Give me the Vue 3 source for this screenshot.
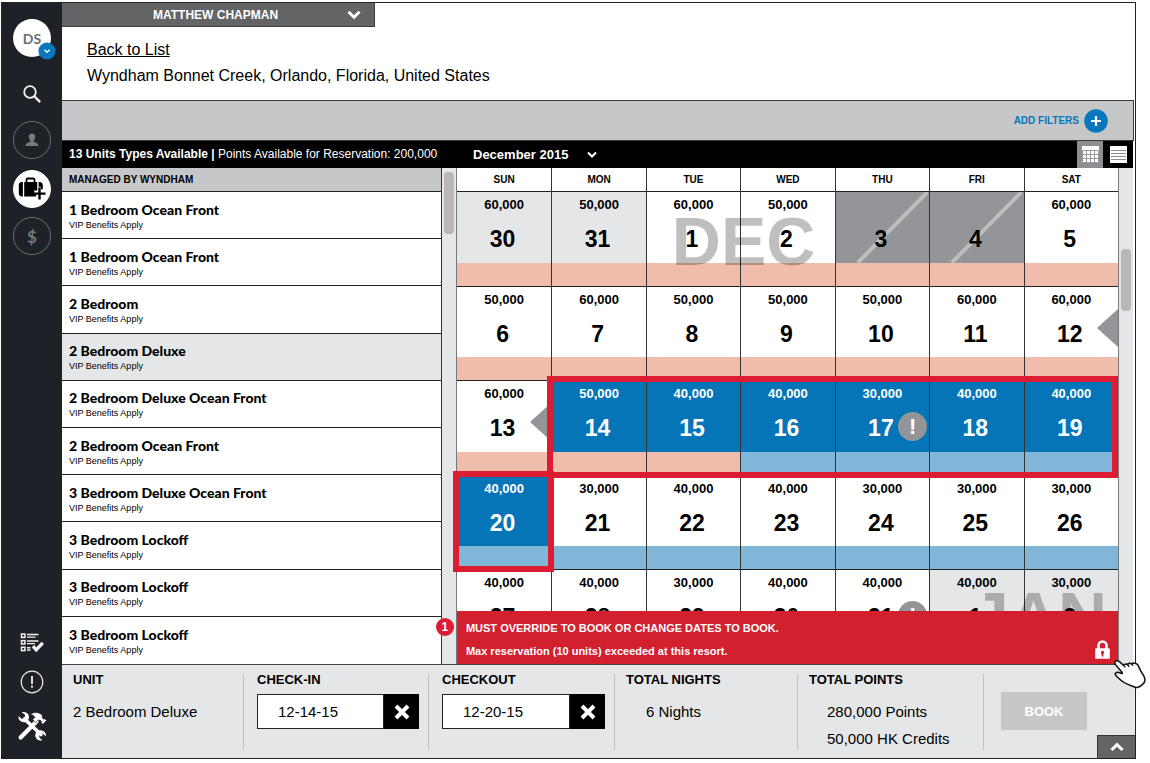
<script setup>
import { ref } from 'vue'

const units = [
  '1 Bedroom Ocean Front',
  '1 Bedroom Ocean Front',
  '2 Bedroom',
  '2 Bedroom Deluxe',
  '2 Bedroom Deluxe Ocean Front',
  '2 Bedroom Ocean Front',
  '3 Bedroom Deluxe Ocean Front',
  '3 Bedroom Lockoff',
  '3 Bedroom Lockoff',
  '3 Bedroom Lockoff'
]
const selectedUnit = ref(3)

const days = ['SUN', 'MON', 'TUE', 'WED', 'THU', 'FRI', 'SAT']

const weeks = [
  [
    { d: 30, p: '60,000', out: true, band: 'peach' },
    { d: 31, p: '50,000', out: true, band: 'peach' },
    { d: 1, p: '60,000', band: 'peach', month: 'DEC' },
    { d: 2, p: '50,000', band: 'peach' },
    { d: 3, closed: true, band: 'peach' },
    { d: 4, closed: true, band: 'peach' },
    { d: 5, p: '60,000', band: 'peach' }
  ],
  [
    { d: 6, p: '50,000', band: 'peach' },
    { d: 7, p: '60,000', band: 'peach' },
    { d: 8, p: '50,000', band: 'peach' },
    { d: 9, p: '50,000', band: 'peach' },
    { d: 10, p: '50,000', band: 'peach' },
    { d: 11, p: '60,000', band: 'peach' },
    { d: 12, p: '60,000', band: 'peach', arrow: true }
  ],
  [
    { d: 13, p: '60,000', band: 'peach', arrow: true },
    { d: 14, p: '50,000', picked: true, band: 'peach' },
    { d: 15, p: '40,000', picked: true, band: 'peach' },
    { d: 16, p: '40,000', picked: true, band: 'sky' },
    { d: 17, p: '30,000', picked: true, band: 'sky', warn: true },
    { d: 18, p: '40,000', picked: true, band: 'sky' },
    { d: 19, p: '40,000', picked: true, band: 'sky' }
  ],
  [
    { d: 20, p: '40,000', picked: true, band: 'sky' },
    { d: 21, p: '30,000', band: 'sky' },
    { d: 22, p: '40,000', band: 'sky' },
    { d: 23, p: '40,000', band: 'sky' },
    { d: 24, p: '30,000', band: 'sky' },
    { d: 25, p: '30,000', band: 'sky' },
    { d: 26, p: '30,000', band: 'sky' }
  ],
  [
    { d: 27, p: '40,000', band: 'sky' },
    { d: 28, p: '40,000', band: 'sky' },
    { d: 29, p: '30,000', band: 'sky' },
    { d: 30, p: '40,000', band: 'sky' },
    { d: 31, p: '40,000', band: 'sky', warn: true },
    { d: 1, p: '40,000', out: true, band: 'sky', month: 'JAN' },
    { d: 2, p: '30,000', out: true, band: 'sky' }
  ]
]

const month = ref('December 2015')
const checkIn = ref('12-14-15')
const checkOut = ref('12-20-15')
</script>

<template>
  <div class="frame">
    <nav class="sidebar" aria-label="Main">
      <button class="avatar" aria-label="Account">
        DS
        <svg class="avatar-badge" viewBox="0 0 18 18" width="18" height="18">
          <circle cx="9" cy="9" r="8.6" fill="#0877bb" />
          <path d="M6.4 7.8 9 10.2l2.6-2.4" fill="none" stroke="#fff" stroke-width="1.4" />
        </svg>
      </button>
      <button class="icon search" aria-label="Search">
        <svg viewBox="0 0 20 20" width="20" height="20" fill="none" stroke="#f2f2f2">
          <circle cx="8" cy="8" r="5.8" stroke-width="1.8" />
          <path d="m12 12 6.2 6.2" stroke-width="2.4" />
        </svg>
      </button>
      <button class="ring person" aria-label="Owner">
        <svg viewBox="0 0 16 16" width="16" height="16" fill="#76797d">
          <path d="M8 1.5c2.2 0 3.3 1.5 3.2 3.4-.1 1.600-.7 2.800-1.500 3.600v1.300c1.200.9 4.800.9 4.800 4.200H1.500c0-3.300 3.600-3.300 4.800-4.200V8.500C5.500 7.700 4.900 6.500 4.800 4.900 4.700 3 5.800 1.500 8 1.500z" />
        </svg>
      </button>
      <button class="ring travel" aria-label="Book travel">
        <svg viewBox="0 0 28 24" width="28" height="24">
          <path d="M8.500 5.500V2.700q0-1.200 1.200-1.200h5.600q1.200 0 1.200 1.200v2.800" fill="none" stroke="#000" stroke-width="1.800" />
          <path d="M6.200 5h13v8.500h-3v4h2v2h-12z" fill="#000" />
          <path d="M4.900 5v14.500H3.200Q.8 19 .8 15.800V8.700Q.8 5.500 3.200 5z" fill="#000" />
          <path d="M20.600 5.100h1.600q2.600.4 2.600 3.600v3.500h-2v-2.400h-2.200z" fill="#000" />
          <path d="M21.500 10.500v12M15.500 16.600h12" stroke="#000" stroke-width="2.400" />
        </svg>
      </button>
      <button class="ring dollar" aria-label="Payments">$</button>

      <button class="icon tasks" aria-label="Tasks">
        <svg viewBox="0 0 24 20" width="24" height="20" fill="none" stroke="#f2f2f2">
          <g stroke-width="1.500">
            <rect x="1.500" y="1" width="3.400" height="3.400" />
            <rect x="1.500" y="7.600" width="3.400" height="3.400" />
            <rect x="1.500" y="14.200" width="3.400" height="3.400" />
            <path d="M7 1.500h11.500M7 4.100h8.500M7 8h11.500M7 10.600h8M7 14.800h3.500M7 17h3.500" stroke-width="1.400" />
          </g>
          <path d="m13 13.200 3.200 3.600 6.600-7" stroke-width="3.400" />
        </svg>
      </button>
      <button class="icon notices" aria-label="Notices">
        <svg viewBox="0 0 24 24" width="24" height="24" fill="none" stroke="#e6e6e6">
          <circle cx="12" cy="12" r="10.800" stroke-width="1.200" />
          <path d="M12 6v8M12 15.600v2.200" stroke-width="1.900" />
        </svg>
      </button>
      <button class="icon tools" aria-label="Settings">
        <svg viewBox="0 0 30 30" width="30" height="30">
          <g fill="none" stroke="#fff" stroke-linecap="round">
            <path d="M7.500 8 24 23.500" stroke-width="3.600" />
            <path d="M19.500 10.500 3.600 26.400" stroke-width="4.200" />
          </g>
          <path d="M1.600 5.300 5 8l3-1-.2-3.400L4.700 1.300C7.500.2 10.900 1.600 11.800 4.600c.7 2.600-.4 5.300-2.700 6.300-2.900 1.100-6.600-.4-7.500-3.300-.2-.8-.2-1.600 0-2.300z" fill="#fff" />
          <path d="m28.700 25.200-3.100-2.900-3.300.9.100 3.500 3 2.500c-2.800 1-6.200-.4-7-3.500-.6-2.600.6-5.200 2.900-6.100 2.900-1.100 6.700.4 7.500 3.500.2.700.2 1.400-.1 2.100z" fill="#fff" />
          <path d="M13.300 3.300C17.200.5 22 .8 25.200 4.300l.2 2.600 1.400 1.300 1-.5 1.700 1.800-3.600 3.700-1.900-1.700.4-1-1.200-1.300-2.300.1-2.200 2.200-3-2.900 2.200-2.200c-.8-1.500-2.200-2.600-4.600-3.100z" fill="#fff" stroke="#1e2128" stroke-width=".7" />
        </svg>
      </button>
    </nav>

    <main class="main">
      <header class="head">
        <button class="client">
          <span class="client-name">MATTHEW CHAPMAN</span>
          <svg viewBox="0 0 14 10" width="14" height="10"><path d="m1.500 1.800 5.500 5.400 5.500-5.400" fill="none" stroke="#fff" stroke-width="3" /></svg>
        </button>
        <div class="titles">
          <a href="#list" class="back">Back to List</a>
          <h1>Wyndham Bonnet Creek, Orlando, Florida, United States</h1>
        </div>
      </header>

      <div class="filters">
        <button class="add">
          ADD FILTERS
          <svg viewBox="0 0 24 24" width="24" height="24">
            <circle cx="12" cy="12" r="11.800" fill="#0877bb" />
            <path d="M12 7v10M7 12h10" stroke="#fff" stroke-width="2.200" />
          </svg>
        </button>
      </div>

      <div class="toolbar">
        <p class="summary"><b>13 Units Types Available |</b> Points Available for Reservation: 200,000</p>
        <label class="month">
          <select v-model="month" aria-label="Month">
            <option>December 2015</option>
            <option>January 2016</option>
          </select>
          <svg viewBox="0 0 10 8" width="10" height="8"><path d="m1 1.500 4 4 4-4" fill="none" stroke="#fff" stroke-width="2" /></svg>
        </label>
        <div class="views">
          <button class="view on" aria-label="Calendar view">
            <svg viewBox="0 0 17 17" width="17" height="17">
              <path d="M0 0h17v17H0z" fill="#fff" />
              <path d="M.5 4.500h16M.5 8.500h16M.5 12.500h16M4.500 4.500v12M8.500 4.500v12M12.500 4.500v12M.5 4.500v12h16v-12" fill="none" stroke="#98999c" />
            </svg>
          </button>
          <button class="view" aria-label="List view">
            <svg viewBox="0 0 17 17" width="17" height="17">
              <path d="M0 0h17v17H0z" fill="#fff" />
              <path d="M1 4.500h15M1 7.500h15M1 10.500h15M1 13.500h15" stroke="#8a8b8e" />
            </svg>
          </button>
        </div>
      </div>

      <div class="body">
        <section class="units">
          <h2>MANAGED BY WYNDHAM</h2>
          <ul>
            <li v-for="(u, i) in units" :key="i">
              <button :class="['unit', { on: i === selectedUnit }]" @click="selectedUnit = i">
                <strong>{{ u }}</strong>
                <span>VIP Benefits Apply</span>
              </button>
            </li>
          </ul>
        </section>

        <div class="track"><div class="thumb"></div></div>

        <section class="calendar">
          <table>
            <thead>
              <tr><th v-for="d in days" :key="d" scope="col">{{ d }}</th></tr>
            </thead>
            <tbody>
              <tr v-for="(w, wi) in weeks" :key="wi">
                <td v-for="(c, ci) in w" :key="ci" :class="{ out: c.out, closed: c.closed, picked: c.picked }">
                  <svg v-if="c.closed" class="slash" viewBox="0 0 94 71" preserveAspectRatio="none">
                    <path d="M22 71 92 0" stroke="#bcbdbf" stroke-width="4" />
                  </svg>
                  <span v-if="c.month" :class="['watermark', c.month.toLowerCase()]">{{ c.month }}</span>
                  <span class="price">{{ c.p }}</span>
                  <span class="day">{{ c.d }}</span>
                  <svg v-if="c.arrow" class="arrow" viewBox="0 0 21 38" width="21" height="38"><path d="M21 0v38L0 19z" fill="#939598" /></svg>
                  <span v-if="c.warn" class="warn">!</span>
                  <span :class="['band', c.band]"></span>
                </td>
              </tr>
            </tbody>
          </table>
          <div class="marks" aria-hidden="true">
            <div class="mark week3"></div>
            <div class="mark week4"></div>
          </div>
          <div class="alert" role="alert">
            <span class="count">1</span>
            <p>MUST OVERRIDE TO BOOK OR CHANGE DATES TO BOOK.</p>
            <p>Max reservation (10 units) exceeded at this resort.</p>
            <svg class="lock" viewBox="0 0 15 19" width="15" height="19">
              <path d="M3.500 9V5.500a4 4 0 0 1 8 0V9" fill="none" stroke="#fff" stroke-width="2.600" />
              <path d="M1 8.300h13q.8 0 .8.800v8.900q0 .8-.8.800H1q-.8 0-.8-.8V9.100q0-.8.800-.8z" fill="#fff" />
              <path d="M7.500 10.800a1.700 1.700 0 0 1 .9 3.100v2.600H6.600v-2.600a1.700 1.700 0 0 1 .9-3.100z" fill="#d2202f" />
            </svg>
          </div>
        </section>

        <div class="track right"><div class="thumb"></div></div>
      </div>

      <footer class="booking">
        <div class="field unit-field">
          <h3>UNIT</h3>
          <p>2 Bedroom Deluxe</p>
        </div>
        <div class="field dates">
          <label for="check-in">CHECK-IN</label>
          <div class="date">
            <input id="check-in" v-model="checkIn" type="text" />
            <button aria-label="Clear check-in" @click="checkIn = ''">
              <svg viewBox="0 0 16 16" width="16" height="16"><path d="m2 2 12 12M14 2 2 14" stroke="#fff" stroke-width="4" /></svg>
            </button>
          </div>
        </div>
        <div class="field dates">
          <label for="check-out">CHECKOUT</label>
          <div class="date">
            <input id="check-out" v-model="checkOut" type="text" />
            <button aria-label="Clear checkout" @click="checkOut = ''">
              <svg viewBox="0 0 16 16" width="16" height="16"><path d="m2 2 12 12M14 2 2 14" stroke="#fff" stroke-width="4" /></svg>
            </button>
          </div>
        </div>
        <div class="field nights">
          <h3>TOTAL NIGHTS</h3>
          <p>6 Nights</p>
        </div>
        <div class="field points">
          <h3>TOTAL POINTS</h3>
          <p>280,000 Points</p>
          <p>50,000 HK Credits</p>
        </div>
        <div class="action">
          <button class="book" disabled>BOOK</button>
        </div>
        <button class="expand" aria-label="Expand">
          <svg viewBox="0 0 14 10" width="14" height="10"><path d="m1.500 8 5.500-5.400L12.500 8" fill="none" stroke="#fff" stroke-width="3" /></svg>
        </button>
      </footer>
    </main>

    <svg class="hand" viewBox="0 0 34 32" width="34" height="32">
      <path d="M2.300 2.500C3.500 1.300 5 1.500 6.400 2.600l4.200 3.800c.5-1.300 2.300-1.700 3.800-.9.700-1.200 2.800-1.500 4.200-.6 1-1 4.600-1.200 6.200.9 1.400 2.400 2.400 5.500 4 8 1.600 2.200 3.200 4.800 3.200 7.200 0 3.200-4.400 6.700-7.700 7.400-2.800.4-4.200-1.200-7.200-2.200-4-1.300-8.800-4.200-12.300-7.700-2.600-2.600-3.200-3.700-2-4.700 1.300-1 3.700-.2 5.800.6.700.3.900-.2.600-.8L2.800 6c-1-1.500-1.400-2.600-.5-3.500z" fill="#fff" stroke="#1a1a1a" stroke-width="1.600" stroke-linejoin="round" />
      <path d="m10.600 6.400 1.800 2M14.400 5.500l1.800 2.200M18.600 4.900l1.400 2" fill="none" stroke="#1a1a1a" stroke-width="1.400" />
    </svg>
  </div>
</template>

<style>
body {
  background: #fff;
}
</style>

<style scoped>
* {
  box-sizing: border-box;
}
.frame {
  position: relative;
  display: flex;
  min-height: calc(100vh - 6px);
  margin: 2px 14px 4px 1px;
  border: 1px solid #222;
  font-family: "Liberation Sans", Arial, sans-serif;
  color: #000;
}
button,
input,
select {
  font-family: inherit;
  margin: 0;
  padding: 0;
  border: 0;
  background: none;
  color: inherit;
}
h1, h2, h3, p, ul {
  margin: 0;
  padding: 0;
}
svg {
  display: block;
  flex: none;
}

/* sidebar */
.sidebar {
  flex: none;
  width: 60px;
  padding: 16px 0 17px;
  display: flex;
  flex-direction: column;
  align-items: center;
  background: #1e2128;
}
.avatar {
  position: relative;
  width: 38px;
  height: 38px;
  border-radius: 50%;
  background: #fff;
  color: #6d6f73;
  font: bold 14px Lato, sans-serif;
}
.avatar-badge {
  position: absolute;
  right: -5px;
  bottom: -3px;
}
.search { margin-top: 27px; }
.ring {
  display: flex;
  align-items: center;
  justify-content: center;
  width: 38px;
  height: 38px;
  border: 1px solid #6a6d72;
  border-radius: 50%;
}
.person { margin-top: 17px; }
.travel {
  margin: 11px 0 9px;
  background: #fff;
  border-color: #fff;
}
.dollar {
  color: #76797d;
  font: bold 17px Lato, sans-serif;
}
.tasks { margin-top: auto; }
.notices { margin: 17px 0; }

/* header */
.main {
  flex: 1;
  min-width: 0;
  display: flex;
  flex-direction: column;
}
.head {
  flex: none;
  height: 97px;
}
.client {
  display: flex;
  align-items: center;
  width: 313px;
  height: 24px;
  padding: 0 13px 0 22px;
  background: #636466;
  border: solid #3c3c3e;
  border-width: 0 1px 1px 0;
  color: #fff;
}
.client-name {
  flex: 1;
  font-size: 12px;
  font-weight: bold;
}
.titles {
  padding: 13px 25px 0;
}
.back {
  font-size: 16px;
  line-height: 19px;
  color: #000;
}
h1 {
  margin-top: 7px;
  font-size: 16px;
  line-height: 20px;
  font-weight: normal;
}
.filters {
  flex: none;
  display: flex;
  align-items: center;
  justify-content: flex-end;
  height: 41px;
  margin-right: 1px;
  padding-right: 25px;
  background: #c6c7c9;
  border: 1px solid #3c3c3e;
  border-left: 0;
}
.add {
  display: flex;
  align-items: center;
  gap: 5px;
  color: #0877bb;
  font-size: 10px;
  font-weight: bold;
}
.toolbar {
  flex: none;
  display: flex;
  height: 27px;
  margin-right: 2px;
  background: #000;
  color: #fff;
}
.summary {
  width: 411px;
  padding-left: 7px;
  font-size: 12px;
  line-height: 27px;
  white-space: nowrap;
}
.month {
  display: flex;
  align-items: center;
  gap: 18px;
}
select {
  appearance: none;
  font-size: 13px;
  font-weight: bold;
}
option {
  color: #000;
}
.views {
  display: flex;
  margin-left: auto;
}
.view {
  display: flex;
  align-items: center;
  justify-content: center;
  width: 30px;
}
.view.on {
  width: 26px;
  background: #8d8f92;
}

/* body */
.body {
  flex: 1;
  display: flex;
  padding-right: 2px;
}
.units {
  flex: 380 1 0;
  min-width: 0;
  display: flex;
  flex-direction: column;
  border-right: 1px solid #333;
}
h2 {
  flex: none;
  height: 24px;
  padding-left: 7px;
  font-size: 10px;
  line-height: 23px;
  background: #c6c7c9;
  border-bottom: 1px solid #222;
}
ul {
  flex: 1;
  display: grid;
  grid-auto-rows: 1fr;
  list-style: none;
}
li {
  display: grid;
  border-bottom: 1px solid #222;
}
li:last-child {
  border-bottom: 0;
}
.unit {
  display: flex;
  flex-direction: column;
  justify-content: center;
  padding: 2px 0 0 7px;
  text-align: left;
}
.unit.on {
  background: #e5e6e8;
}
.unit strong {
  font: 900 14px/17px Lato, sans-serif;
}
.unit span {
  font-size: 9px;
  line-height: 14px;
}
.track {
  flex: none;
  width: 14px;
  padding: 4px 2px 0;
  background: #e5e6e8;
}
.thumb {
  height: 62px;
  border-radius: 4px;
  background: #b9b7b8;
}
.track.right {
  padding-top: 81px;
}

/* calendar */
.calendar {
  position: relative;
  flex: 663 1 0;
  min-width: 0;
  display: flex;
  border: solid #77787a;
  border-width: 0 1px;
}
table {
  flex: 1;
  display: flex;
  flex-direction: column;
}
tr {
  display: grid;
  grid-template-columns: repeat(7, 1fr);
}
thead th {
  padding: 0;
  height: 23px;
  font-size: 10px;
  line-height: 23px;
}
tbody {
  flex: 1;
  display: grid;
  grid-auto-rows: 1fr;
}
th + th,
td + td {
  border-left: 1px solid #333;
}
td {
  position: relative;
  display: flex;
  flex-direction: column;
  align-items: stretch;
  padding: 0;
  border-top: 1px solid #222;
  text-align: center;
  font-weight: bold;
}
.out { background: #e5e6e8; }
.closed { background: #939598; }
.picked {
  background: #0675b8;
  color: #fff;
}
.price {
  position: relative;
  z-index: 2;
  height: 16px;
  margin-top: 5px;
  font-size: 13px;
  line-height: 16px;
}
.day {
  position: relative;
  z-index: 2;
  flex: 1;
  padding-top: 12px;
  padding-right: 3px;
  font-size: 23px;
  line-height: 28px;
}
.band {
  height: 23px;
}
.peach { background: #f0bdad; }
.sky { background: #80b6d8; }
.slash {
  position: absolute;
  inset: 0;
  width: 100%;
  height: calc(100% - 23px);
}
.watermark {
  position: absolute;
  z-index: 1;
  left: 25px;
  top: 15px;
  color: rgba(0, 0, 0, 0.25);
  font-size: 68px;
  line-height: 68px;
}
.jan {
  left: 41px;
  top: 12px;
}
.arrow {
  position: absolute;
  right: 0;
  top: 22px;
}
.warn {
  position: absolute;
  z-index: 2;
  right: 2px;
  top: 31px;
  width: 29px;
  height: 29px;
  border-radius: 50%;
  background: #939598;
  color: #fff;
  font-size: 22px;
  line-height: 29px;
}
.marks {
  position: absolute;
  z-index: 3;
  inset: 23px 0 0;
  display: grid;
  grid-template: repeat(5, 1fr) / repeat(7, 1fr);
  pointer-events: none;
}
.mark {
  margin: -4px -3px -3px -4px;
  border: 6px solid #dc1c30;
}
.week3 {
  grid-area: 3 / 2 / 4 / 8;
  margin-right: 0;
}
.week4 {
  grid-area: 4 / 1 / 5 / 2;
}
.alert {
  position: absolute;
  z-index: 4;
  inset: auto 0 0;
  height: 53px;
  padding: 6px 9px;
  background: #d2202f;
  color: #fff;
  font-size: 11px;
  font-weight: bold;
  line-height: 23px;
}
.count {
  position: absolute;
  left: -21px;
  top: 7px;
  width: 18px;
  height: 18px;
  border-radius: 50%;
  background: #dc1c30;
  font-size: 12px;
  line-height: 18px;
  text-align: center;
}
.lock {
  position: absolute;
  right: 8px;
  bottom: 5px;
}

/* booking bar */
.booking {
  position: relative;
  flex: none;
  display: grid;
  grid-template-columns:
    minmax(0, 182fr) minmax(0, 185fr) minmax(0, 186fr)
    minmax(0, 183fr) minmax(0, 186fr) minmax(0, 151fr);
  min-height: 94px;
  background: #e5e6e8;
  border-top: 1px solid #444;
}
.field {
  margin: 9px 0 8px;
  padding-left: 11px;
  border-right: 1px solid #bfc0c2;
}
h3,
.field label {
  display: block;
  font-size: 13px;
  font-weight: bold;
  line-height: 12px;
}
.field p {
  margin-top: 18px;
  font-size: 15px;
  line-height: 16px;
}
.dates {
  padding: 0 9px 0 13px;
}
.date {
  display: flex;
  height: 35px;
  margin-top: 8px;
}
.date input {
  flex: 1;
  min-width: 0;
  padding-left: 20px;
  border: 1px solid #222;
  background: #fff;
  font-size: 15px;
}
.date button {
  display: flex;
  align-items: center;
  justify-content: center;
  width: 35px;
  background: #000;
}
.nights p {
  padding-left: 20px;
}
.points p {
  padding-left: 18px;
}
.points p + p {
  margin-top: 11px;
}
.action {
  padding: 27px 0 0 17px;
}
.book {
  width: 86px;
  height: 38px;
  background: #c6c7c9;
  color: #fff;
  font-size: 13px;
  font-weight: bold;
}
.expand {
  position: absolute;
  right: 0;
  bottom: 0;
  display: flex;
  align-items: center;
  justify-content: center;
  width: 38px;
  height: 23px;
  background: #636466;
  border: solid #333;
  border-width: 1px 0 0 1px;
}
.hand {
  position: absolute;
  z-index: 5;
  right: -12px;
  bottom: 67px;
}
</style>
